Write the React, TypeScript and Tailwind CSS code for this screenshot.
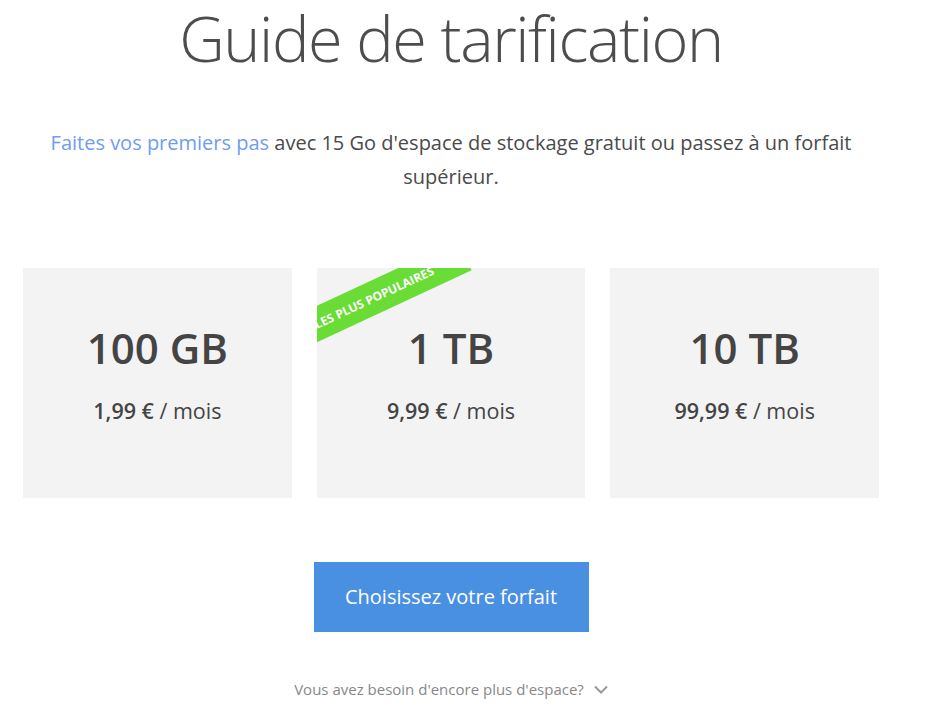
const plans = [
  { size: '100 GB', price: '1,99 €', popular: false },
  { size: '1 TB', price: '9,99 €', popular: true },
  { size: '10 TB', price: '99,99 €', popular: false },
];

function PlanCard({ size, price, popular }: { size: string; price: string; popular: boolean }) {
  return (
    <div className="relative h-[230px] overflow-hidden bg-[#f3f3f3] flex flex-col items-center pt-[56px]">
      {popular && (
        <div className="absolute left-[-43px] top-[13px] w-[200px] h-[33px] -rotate-[25deg] bg-[#69dd35] flex items-center justify-center text-white text-[12px] font-bold uppercase">
          Les plus populaires
        </div>
      )}
      <div className="text-[42px] leading-[48px] font-semibold text-[#444]">{size}</div>
      <div className="mt-[25px] text-[21.5px] leading-[28px] text-[#444]">
        <span className="font-semibold">{price}</span> / mois
      </div>
    </div>
  );
}

export default function App() {
  return (
    <div className="min-h-[724px] bg-white" style={{ fontFamily: '"Open Sans", "Liberation Sans", sans-serif' }}>
      <div className="w-[902px] text-center">
        <h1 className="pt-[6px] text-[63px] leading-none font-light tracking-[-1.4px] text-[#4d4d4d]">
          Guide de tarification
        </h1>

        <p className="mt-[57px] mx-auto w-[840px] text-[20px] leading-[34px] text-[#4a4a4a]">
          <a className="text-[#6f9cf5]">Faites vos premiers pas</a> avec 15 Go d'espace de stockage gratuit ou passez à un forfait supérieur.
        </p>

        <div className="mt-[74px] px-[23px] grid grid-cols-3 gap-[25px]">
          {plans.map((p) => (
            <PlanCard key={p.size} {...p} />
          ))}
        </div>

        <button className="mt-[64px] w-[275px] h-[70px] bg-[#4a90e2] text-white text-[20px]">
          Choisissez votre forfait
        </button>

        <div className="mt-[47px] flex items-center justify-center gap-[10px] text-[15px] leading-[20px] text-[#888]">
          <span>Vous avez besoin d'encore plus d'espace?</span>
          <svg width="14" height="9" viewBox="0 0 14 9" fill="none" stroke="#999" strokeWidth="2">
            <path d="M1 1.5l6 6 6-6" />
          </svg>
        </div>
      </div>
    </div>
  );
}
